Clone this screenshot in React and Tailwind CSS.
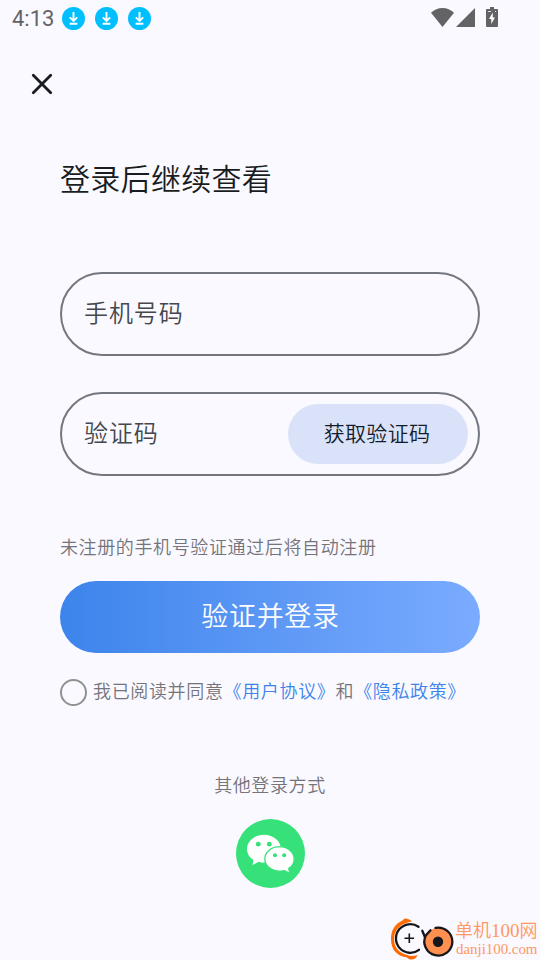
import React from 'react';

const DownloadBadge = () => (
  <svg className="size-[23px]" viewBox="0 0 23 23" fill="none">
    <circle cx="11.5" cy="11.5" r="11.5" fill="#00bfff" />
    <path d="M11.5 5v9M7.8 10.3l3.7 3.7 3.7-3.7M7.6 16.7h7.8" stroke="#fff" strokeWidth="1.9" />
  </svg>
);

const WifiIcon = () => (
  <svg className="h-[19px] w-[23px]" viewBox="0 0 23 19" fill="#636366">
    <path d="M11.5 19 0 4.8C3.2 1.7 7.2 0 11.5 0S19.8 1.7 23 4.8Z" />
  </svg>
);

const SignalIcon = () => (
  <svg className="ml-[2px] size-[19px]" viewBox="0 0 19 19" fill="#636366">
    <path d="M19 0v19H0Z" />
  </svg>
);

const BatteryIcon = () => (
  <svg className="ml-[11px] h-5 w-3" viewBox="0 0 12 20">
    <path d="M4 0h4v2h3q1 0 1 1v16q0 1-1 1H1q-1 0-1-1V3q0-1 1-1h3Z" fill="#636366" />
    <path d="M6.8 5.5 3 12h2.3v5L9 10.5H6.8Z" fill="#fff" />
    <path d="M2 4.5h3M9 4.5h1" stroke="#fff" strokeWidth="0.8" />
  </svg>
);

const StatusBar = () => (
  <div className="flex h-9 items-start pt-[7px]">
    <span className="ml-3 w-[50px] font-[Roboto] text-[22px] font-normal leading-6 text-[#636366]">4:13</span>
    <div className="flex gap-[10px]">
      <DownloadBadge />
      <DownloadBadge />
      <DownloadBadge />
    </div>
    <div className="mr-[42px] ml-auto flex items-end">
      <WifiIcon />
      <SignalIcon />
      <BatteryIcon />
    </div>
  </div>
);

const Field = ({ label, children }) => (
  <div className="flex h-[84px] items-center justify-between rounded-full border-2 border-[#74777f] pr-[10px] pl-[22px]">
    <span className="-mt-[5px] text-2xl tracking-[0.9px] text-[#44474e]">{label}</span>
    {children}
  </div>
);

const WechatIcon = () => (
  <svg className="size-[69px]" viewBox="0 0 69 69">
    <circle cx="34.5" cy="34.5" r="34.5" fill="#36e17a" />
    <path
      d="M28 15.8c-9.4 0-17 6.4-17 14.2 0 4.6 2.500 8.5 6.5 11l-1 5 6.2-3.2c1.8.6 3.5.9 5.3.9 9.4 0 17-6.1 17-13.7S37.4 15.8 28 15.8Z"
      fill="#fff"
    />
    <path
      d="M43.5 27.6c-8.1 0-14.7 5.5-14.7 12.3s6.6 12.3 14.7 12.3c1.7 0 3.3-.2 4.7-.7l5.7 3-1.2-4.9c3.3-2.2 5.5-5.7 5.5-9.7 0-6.8-6.6-12.3-14.7-12.3Z"
      fill="#fff"
      stroke="#36e17a"
      strokeWidth="1.3"
    />
    <g fill="#36e17a">
      <circle cx="22.3" cy="25.2" r="2.4" />
      <circle cx="33.3" cy="25.2" r="2.4" />
      <circle cx="39" cy="36.3" r="2" />
      <circle cx="48.2" cy="36.3" r="2" />
    </g>
  </svg>
);

const Watermark = () => (
  <div className="absolute right-0 bottom-0 flex h-[42px] w-[150px] text-[#ff9861]">
    <svg className="h-[42px] w-[66px] shrink-0" viewBox="0 0 66 42" fill="none">
      <path
        d="M22 3.5C17-.5 14 0 12.5 2.5 5 6 1 12 1 21c0 11 6.5 17.5 16 18.500 3 3.5 9 2.500 10.5-2.500-3.5 1.2-7 1.500-10.500 0C9 35 4 29.5 4 21 4 12 10 5.5 22 3.5Z"
        fill="#ff6b00"
      />
      <path
        d="M28.500 8.800A14.300 14.300 0 1 0 29 31.800"
        stroke="#17161b"
        strokeWidth="2.3"
        strokeLinecap="round"
      />
      <path d="M14.5 20.3h9.600M19.300 15.500v9.600" stroke="#17161b" strokeWidth="1.6" />
      <circle cx="48.200" cy="23.700" r="13.7" fill="#ff9050" />
      <path
        d="M45.500 9.900A14 14 0 1 1 35.800 17.400l4.700-5.100M35.800 17.400 34.800 18.800 32.300 12.800"
        stroke="#17161b"
        strokeWidth="2.3"
        strokeLinecap="round"
      />
      <circle cx="48" cy="23.800" r="5.2" fill="#17161b" />
    </svg>
    <div className="flex flex-col whitespace-nowrap font-['Liberation_Serif','Noto_Sans_CJK_SC',serif]">
      <span className="-ml-px pt-px text-[18px] leading-[24px]">
        单机<span className="text-[19px]">100</span>网
      </span>
      <span className="-mt-[2px] text-[15px] leading-4 tracking-[-0.05px]">danji100.com</span>
    </div>
  </div>
);

const App = () => {
  return (
    <div className="relative h-[960px] w-[540px] overflow-hidden bg-[#faf9ff] font-['Noto_Sans_CJK_SC',sans-serif] font-[350]">
      <StatusBar />

      <button className="mt-9 ml-[30px] block">
        <svg className="size-6" viewBox="0 0 24 24" fill="none">
          <path d="m3.3 3.3 17.4 17.4M20.7 3.3 3.3 20.7" stroke="#191c20" strokeWidth="2.8" strokeLinecap="round" />
        </svg>
      </button>

      <main className="mx-[60px] flex flex-col">
        <h1 className="mt-[61px] text-[30px] leading-10 tracking-[0.3px] text-[#191c20]">登录后继续查看</h1>

        <div className="mt-[75px] flex flex-col gap-9">
          <Field label="手机号码" />
          <Field label="验证码">
            <button className="h-[60px] w-[180px] rounded-full bg-[#dae2f9] pr-[2px] pb-[2px] text-[21px] tracking-[0.3px] text-[#131c2c]">
              获取验证码
            </button>
          </Field>
        </div>

        <p className="mt-14 text-[18px] leading-7 tracking-[0.62px] text-[#74747a]">未注册的手机号验证通过后将自动注册</p>

        <button className="mt-[21px] h-[72px] rounded-full bg-linear-to-r from-[#3c84eb] to-[#7aabff] pb-1 pl-px text-[27px] tracking-[0.7px] text-white">
          验证并登录
        </button>

        <div className="mt-[26px] flex h-[27px] items-center whitespace-nowrap text-[18px] tracking-[0.65px] text-[#74747a]">
          <span className="mr-[6px] size-[27px] shrink-0 rounded-full border-2 border-[#919191]" />
          <span className="-mt-1">
            我已阅读并同意<span className="text-[#3c84eb]">《用户协议》</span>和<span className="text-[#3c84eb]">《隐私政策》</span>
          </span>
        </div>

        <div className="mt-16 flex flex-col items-center">
          <p className="text-[18px] leading-7 tracking-[0.62px] text-[#74747a]">其他登录方式</p>
          <button className="mt-[21px] ml-px">
            <WechatIcon />
          </button>
        </div>
      </main>

      <Watermark />
    </div>
  );
};

export default App;
